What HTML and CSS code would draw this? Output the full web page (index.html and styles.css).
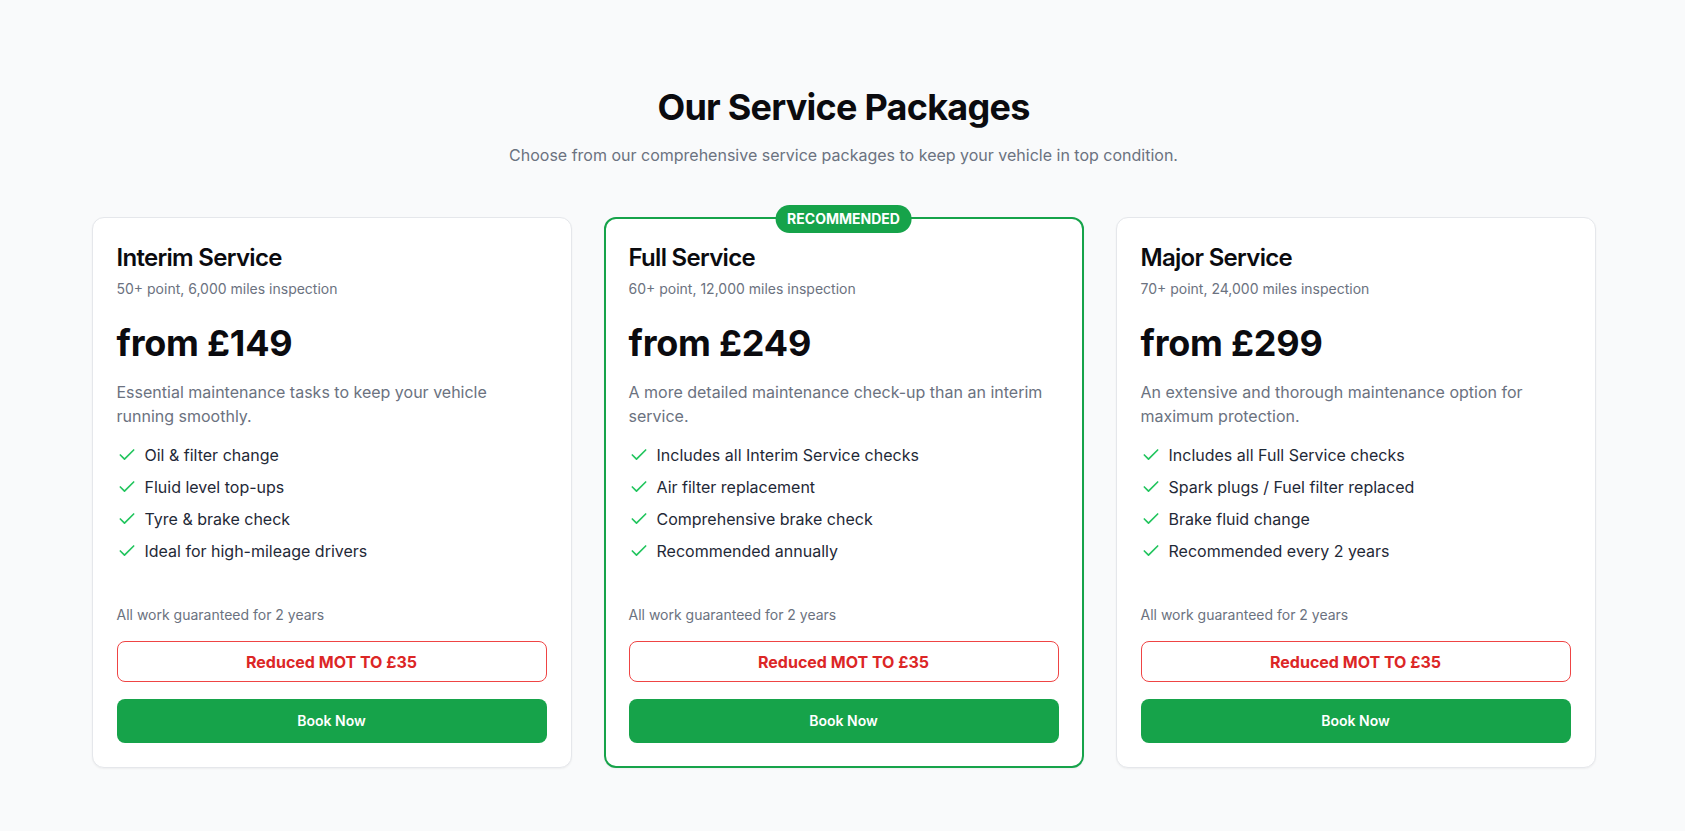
FILE: index.html
```html
<!DOCTYPE html>
<html lang="en">
<head>
    <meta charset="UTF-8">
    <meta name="viewport" content="width=device-width, initial-scale=1.0">
    <title>Service Packages</title>
    <link rel="stylesheet" href="styles.css">
</head>
<body>
    <section class="packages">
        <div class="container">
            <h1 class="section-title">Our Service Packages</h1>
            <p class="section-subtitle">Choose from our comprehensive service packages to keep your vehicle in top condition.</p>

            <div class="package-grid">
                <div class="package-card">
                    <h2 class="package-name">Interim Service</h2>
                    <p class="package-meta">50+ point, 6,000 miles inspection</p>
                    <div class="package-price">from £149</div>
                    <p class="package-desc">Essential maintenance tasks to keep your vehicle running smoothly.</p>
                    <ul class="feature-list">
                        <li><svg class="check" viewBox="0 0 24 24"><path d="M20 6 9 17l-5-5"/></svg>Oil &amp; filter change</li>
                        <li><svg class="check" viewBox="0 0 24 24"><path d="M20 6 9 17l-5-5"/></svg>Fluid level top-ups</li>
                        <li><svg class="check" viewBox="0 0 24 24"><path d="M20 6 9 17l-5-5"/></svg>Tyre &amp; brake check</li>
                        <li><svg class="check" viewBox="0 0 24 24"><path d="M20 6 9 17l-5-5"/></svg>Ideal for high-mileage drivers</li>
                    </ul>
                    <p class="guarantee">All work guaranteed for 2 years</p>
                    <div class="mot-offer">Reduced MOT TO £35</div>
                    <button class="book-btn">Book Now</button>
                </div>

                <div class="package-card featured">
                    <span class="badge">RECOMMENDED</span>
                    <h2 class="package-name">Full Service</h2>
                    <p class="package-meta">60+ point, 12,000 miles inspection</p>
                    <div class="package-price">from £249</div>
                    <p class="package-desc">A more detailed maintenance check-up than an interim service.</p>
                    <ul class="feature-list">
                        <li><svg class="check" viewBox="0 0 24 24"><path d="M20 6 9 17l-5-5"/></svg>Includes all Interim Service checks</li>
                        <li><svg class="check" viewBox="0 0 24 24"><path d="M20 6 9 17l-5-5"/></svg>Air filter replacement</li>
                        <li><svg class="check" viewBox="0 0 24 24"><path d="M20 6 9 17l-5-5"/></svg>Comprehensive brake check</li>
                        <li><svg class="check" viewBox="0 0 24 24"><path d="M20 6 9 17l-5-5"/></svg>Recommended annually</li>
                    </ul>
                    <p class="guarantee">All work guaranteed for 2 years</p>
                    <div class="mot-offer">Reduced MOT TO £35</div>
                    <button class="book-btn">Book Now</button>
                </div>

                <div class="package-card">
                    <h2 class="package-name">Major Service</h2>
                    <p class="package-meta">70+ point, 24,000 miles inspection</p>
                    <div class="package-price">from £299</div>
                    <p class="package-desc">An extensive and thorough maintenance option for maximum protection.</p>
                    <ul class="feature-list">
                        <li><svg class="check" viewBox="0 0 24 24"><path d="M20 6 9 17l-5-5"/></svg>Includes all Full Service checks</li>
                        <li><svg class="check" viewBox="0 0 24 24"><path d="M20 6 9 17l-5-5"/></svg>Spark plugs / Fuel filter replaced</li>
                        <li><svg class="check" viewBox="0 0 24 24"><path d="M20 6 9 17l-5-5"/></svg>Brake fluid change</li>
                        <li><svg class="check" viewBox="0 0 24 24"><path d="M20 6 9 17l-5-5"/></svg>Recommended every 2 years</li>
                    </ul>
                    <p class="guarantee">All work guaranteed for 2 years</p>
                    <div class="mot-offer">Reduced MOT TO £35</div>
                    <button class="book-btn">Book Now</button>
                </div>
            </div>
        </div>
    </section>
</body>
</html>
```

FILE: styles.css
```css
* {
    box-sizing: border-box;
}

body {
    margin: 0;
    font-family: 'Inter', 'Liberation Sans', sans-serif;
    background-color: #f9fafb;
    color: #111827;
}

.packages {
    padding: 87px 0 64px;
}

.container {
    max-width: 1536px;
    margin: 0 auto;
    padding: 0 15px 0 17px;
}

.section-title {
    margin: 0 0 14px;
    text-align: center;
    font-size: 36px;
    line-height: 40px;
    font-weight: 700;
    color: #0b0b0f;
    letter-spacing: -0.75px;
}

.section-subtitle {
    margin: 0 0 48px;
    text-align: center;
    font-size: 16px;
    line-height: 28px;
    color: #6b7280;
}

.package-grid {
    display: grid;
    grid-template-columns: repeat(3, 1fr);
    gap: 32px;
}

.package-card {
    position: relative;
    display: flex;
    flex-direction: column;
    background-color: #fff;
    border: 1px solid #e5e7eb;
    border-radius: 12px;
    padding: 24px;
    box-shadow: 0 1px 2px rgba(0, 0, 0, 0.05);
}

.package-card.featured {
    border: 2px solid #16a34a;
    padding: 23px;
}

.badge {
    position: absolute;
    top: -14px;
    left: 50%;
    transform: translateX(-50%);
    background-color: #16a34a;
    color: #fff;
    font-size: 14px;
    line-height: 20px;
    font-weight: 700;
    padding: 4px 12px;
    border-radius: 999px;
}

.package-name {
    margin: 0 0 5px;
    font-size: 24px;
    line-height: 32px;
    font-weight: 600;
    color: #0b0b0f;
    letter-spacing: -0.7px;
}

.package-meta {
    margin: 0 0 24px;
    font-size: 14px;
    line-height: 20px;
    color: #6b7280;
}

.package-price {
    margin-bottom: 18px;
    font-size: 36px;
    line-height: 40px;
    font-weight: 700;
    color: #0b0b0f;
    letter-spacing: -0.2px;
}

.package-desc {
    margin: 0 0 15px;
    font-size: 16px;
    line-height: 23.5px;
    color: #6b7280;
}

.feature-list {
    flex: 1;
    list-style: none;
    margin: 0;
    padding: 0;
    display: flex;
    flex-direction: column;
    gap: 8px;
}

.feature-list li {
    display: flex;
    align-items: center;
    gap: 8px;
    font-size: 16px;
    line-height: 24px;
    color: #1f2937;
}

.check {
    width: 20px;
    height: 20px;
    flex-shrink: 0;
    fill: none;
    stroke: #22c55e;
    stroke-width: 2;
    stroke-linecap: round;
    stroke-linejoin: round;
}

.guarantee {
    margin: 42px 0 16px;
    font-size: 14px;
    line-height: 20px;
    color: #6b7280;
}

.mot-offer {
    border: 1px solid #ef4444;
    border-radius: 8px;
    padding: 7.5px 16px;
    text-align: center;
    font-size: 16px;
    line-height: 24px;
    font-weight: 700;
    color: #dc2626;
}

.book-btn {
    margin-top: 17px;
    width: 100%;
    border: none;
    border-radius: 8px;
    padding: 12px 16px;
    background-color: #16a34a;
    color: #fff;
    font-family: inherit;
    font-size: 14px;
    line-height: 20px;
    font-weight: 600;
    cursor: pointer;
}

.book-btn:hover {
    background-color: #15803d;
}
```
